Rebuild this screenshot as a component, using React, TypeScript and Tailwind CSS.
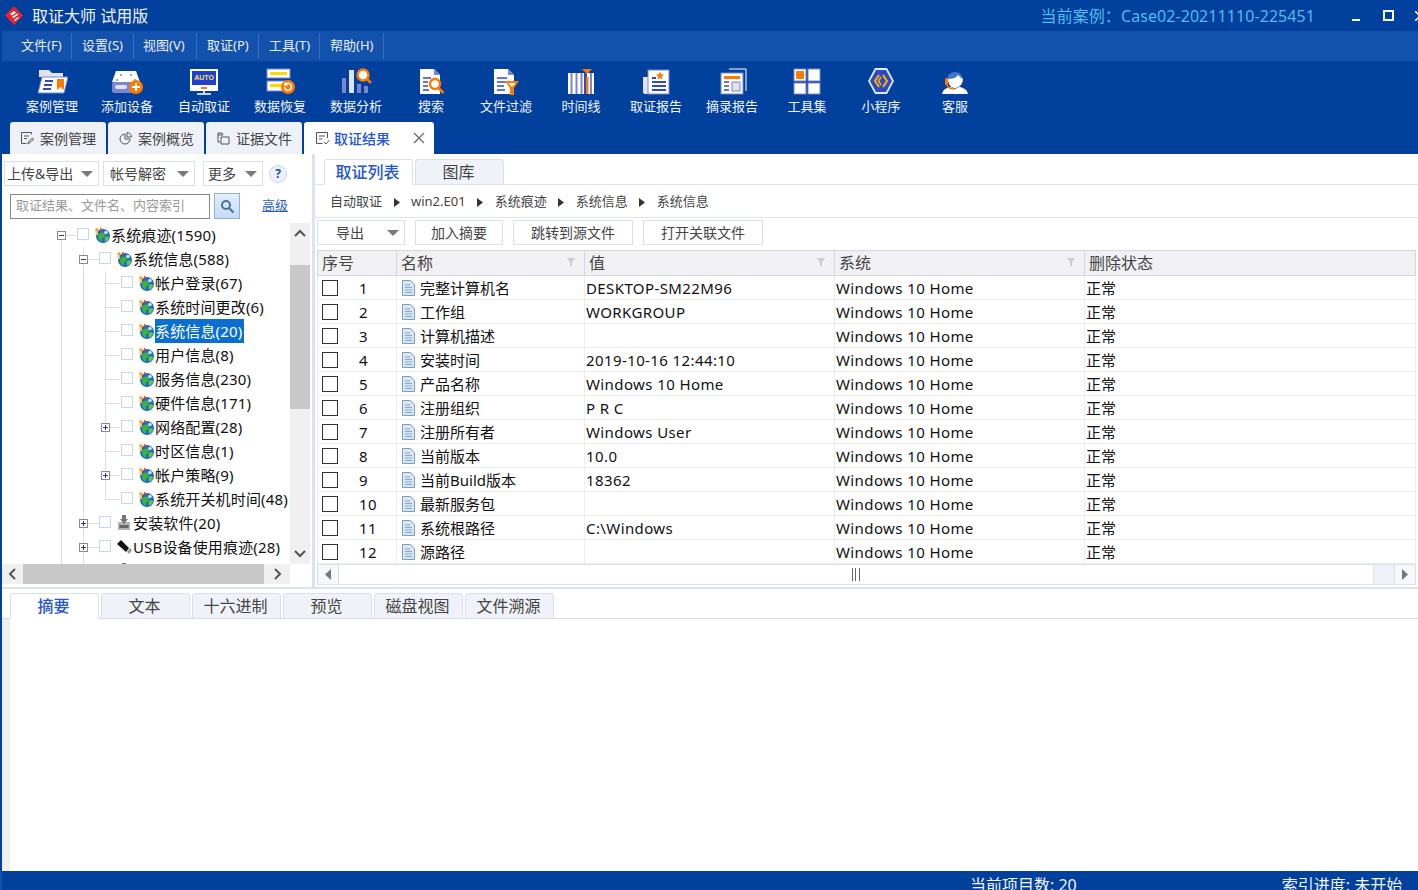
import type { ReactNode } from "react";

const TOOLBAR_ICONS: Record<string, ReactNode> = {
  case: (
    <>
      <path d="M3 3h10l3 3h11v4H3z" fill="#dfe3f5" />
      <path d="M6 10h26l-4 16H2z" fill="#fff" stroke="#7b86cc" />
      <path d="M9 14h8M8 18h8M7 22h8" stroke="#2f49c4" strokeWidth="2" />
      <path d="M21 12h7v11l-3.500-3-3.500 3z" fill="#ff7a00" />
    </>
  ),
  device: (
    <>
      <path d="M5 4h20l4 11H1z" fill="#fff" />
      <circle cx="10" cy="8" r="1" fill="#7b86cc" />
      <circle cx="20" cy="8" r="1" fill="#7b86cc" />
      <circle cx="6" cy="13" r="1" fill="#7b86cc" />
      <circle cx="24" cy="13" r="1" fill="#7b86cc" />
      <rect x="1" y="15" width="27" height="11" rx="2" fill="#7b86cc" />
      <rect x="4" y="18" width="12" height="4" rx="2" fill="#dfe3f5" />
      <circle cx="25" cy="20" r="7" fill="#ff7a00" />
      <path d="M25 16v8M21 20h8" stroke="#fff" strokeWidth="2" />
    </>
  ),
  auto: (
    <>
      <rect x="2" y="2" width="28" height="22" fill="#fff" />
      <rect x="4" y="4" width="24" height="14" fill="#1f3fd0" />
      <text x="16" y="13" textAnchor="middle" fontSize="7" fontWeight="700" fill="#ffe14d" fontFamily="Liberation Sans, sans-serif">AUTO</text>
      <rect x="13" y="20" width="6" height="2" fill="#ff7a00" />
      <path d="M9 27h14M16 24v3" stroke="#fff" strokeWidth="1.500" />
    </>
  ),
  recover: (
    <>
      <rect x="3" y="2" width="23" height="9" fill="#fff" stroke="#7b86cc" />
      <rect x="6" y="5" width="17" height="3" fill="#ffd800" />
      <rect x="3" y="14" width="23" height="10" fill="#fff" stroke="#7b86cc" />
      <rect x="6" y="17" width="12" height="3" fill="#ffd800" />
      <circle cx="24" cy="20" r="7" fill="#ff7a00" />
      <path d="M20.500 20a3.500 3.500 0 1 0 1.500-3M21 15.500V18h2.500" stroke="#fff" strokeWidth="1.500" fill="none" />
    </>
  ),
  analysis: (
    <>
      <rect x="2" y="11" width="4" height="15" fill="#7b86cc" />
      <rect x="9" y="3" width="5" height="23" fill="#dfe3f5" />
      <rect x="17" y="17" width="4" height="9" fill="#7b86cc" />
      <rect x="24" y="19" width="4" height="7" fill="#7b86cc" />
      <circle cx="23" cy="8" r="5.500" fill="#fff" stroke="#ff7a00" strokeWidth="2.500" />
      <path d="M27 12l4 4" stroke="#ff7a00" strokeWidth="2.500" />
    </>
  ),
  search: (
    <>
      <path d="M5 2h14l6 6v19H5z" fill="#fff" />
      <path d="M19 2v6h6z" fill="#7b86cc" />
      <path d="M8 11h8M8 15h5M8 19h5M8 23h6" stroke="#2f49c4" strokeWidth="1.500" />
      <circle cx="20" cy="17" r="5" fill="#fff" stroke="#ff7a00" strokeWidth="2.500" />
      <path d="M23.500 21l5 5" stroke="#ff7a00" strokeWidth="2.500" />
    </>
  ),
  filter: (
    <>
      <path d="M4 2h14l6 6v19H4z" fill="#fff" />
      <path d="M18 2v6h6z" fill="#7b86cc" />
      <path d="M7 11h10M7 15h9M7 19h7M7 23h8" stroke="#2f49c4" strokeWidth="1.500" />
      <path d="M15 14h14l-5 7v7h-4v-7z" fill="#ff7a00" />
      <path d="M18.500 16h7l-3.500 4z" fill="#fff" />
    </>
  ),
  timeline: (
    <>
      <rect x="3" y="6" width="26" height="21" fill="#fff" />
      <path d="M6.500 6v21M11.500 6v21M16.500 6v21" stroke="#7b86cc" strokeWidth="2" />
      <rect x="19" y="6" width="3" height="21" fill="#2f49c4" />
      <rect x="21" y="10" width="2.500" height="17" fill="#ff7a00" />
      <path d="M26 6v21" stroke="#7b86cc" strokeWidth="2" />
      <path d="M17 2h10l-5 5z" fill="#ff7a00" />
    </>
  ),
  report: (
    <>
      <path d="M3 10h6v17H5a2 2 0 0 1-2-2z" fill="#dfe3f5" />
      <rect x="8" y="3" width="21" height="24" fill="#fff" stroke="#7b86cc" />
      <path d="M20 4.500l1.200 2.800 3 .2-2.300 2 .8 3-2.700-1.600-2.700 1.600.8-3-2.300-2 3-.2z" fill="#ff7a00" />
      <path d="M12 11h4M12 15h14M12 19h14M12 23h14" stroke="#2f49c4" strokeWidth="2" />
    </>
  ),
  excerpt: (
    <>
      <path d="M13 2h17v22" fill="none" stroke="#fff" strokeWidth="1" />
      <rect x="5" y="6" width="22" height="21" fill="#fff" stroke="#7b86cc" />
      <rect x="8" y="9" width="16" height="3" fill="#ff7a00" />
      <path d="M8 15h5M8 19h5M8 23h5" stroke="#2f49c4" strokeWidth="1.500" />
      <rect x="16" y="15" width="8" height="9" fill="#dfe3f5" stroke="#7b86cc" />
    </>
  ),
  tools: (
    <>
      <rect x="3" y="2" width="12" height="12" fill="#fff" stroke="#7b86cc" />
      <rect x="5" y="4" width="8" height="8" fill="#ff7a00" />
      <rect x="17" y="2" width="12" height="12" fill="#fff" stroke="#7b86cc" />
      <rect x="3" y="16" width="12" height="11" fill="#fff" stroke="#7b86cc" />
      <rect x="17" y="16" width="12" height="11" fill="#fff" stroke="#7b86cc" />
    </>
  ),
  miniapp: (
    <>
      <path d="M10 1h12l7 13-7 13H10L3 14z" fill="#d8f0fa" />
      <path d="M11 3h10l6 11-6 11H11L5 14z" fill="#2f49c4" />
      <path d="M14 8l-4 6 4 6M18 8l4 6-4 6" fill="none" stroke="#ffb300" strokeWidth="2" />
      <path d="M16 10l-2.500 4 2.500 4" fill="none" stroke="#ffb300" strokeWidth="1.500" />
    </>
  ),
  agent: (
    <>
      <path d="M8 13a8 8 0 1 1 16 0z" fill="#3f78c8" />
      <path d="M9 12c4 0 8-1 10-4 2 2 3 3 5 4 0 5-4 9-8 9s-7-4-7-9z" fill="#fff" />
      <path d="M3 27c1-5 6-7 9-7l4 2 4-2c3 0 8 2 9 7z" fill="#fff" />
      <rect x="6" y="11" width="3" height="7" rx="1" fill="#ff7a00" />
      <path d="M8 18c1 3 4 4 8 4" stroke="#ff7a00" strokeWidth="1.500" fill="none" />
    </>
  ),
};

const toolbarItems = [
  ["case", "案例管理", ""],
  ["device", "添加设备", "ml-[1px]"],
  ["auto", "自动取证", "ml-[3px]"],
  ["recover", "数据恢复", "ml-[2px]"],
  ["analysis", "数据分析", "ml-[2px]"],
  ["search", "搜索", "ml-[1px]"],
  ["filter", "文件过滤", "ml-[1px]"],
  ["timeline", "时间线", "ml-[1px]"],
  ["report", "取证报告", "ml-[1px]"],
  ["excerpt", "摘录报告", "ml-[2px]"],
  ["tools", "工具集", "ml-[1px]"],
  ["miniapp", "小程序", ""],
  ["agent", "客服", ""],
];

const menuItems = [
  ["文件(F)", "w-[70px] pl-[19px]"],
  ["设置(S)", "w-[62px] pl-[10px]"],
  ["视图(V)", "w-[63px] pl-[9px]"],
  ["取证(P)", "w-[62px] pl-[10px]"],
  ["工具(T)", "w-[61px] pl-[10px]"],
  ["帮助(H)", "w-[64px] pl-[10px]"],
];

const rows = [
  ["完整计算机名", "DESKTOP-SM22M96"],
  ["工作组", "WORKGROUP"],
  ["计算机描述", ""],
  ["安装时间", "2019-10-16 12:44:10"],
  ["产品名称", "Windows 10 Home"],
  ["注册组织", "P R C"],
  ["注册所有者", "Windows User"],
  ["当前版本", "10.0"],
  ["当前Build版本", "18362"],
  ["最新服务包", ""],
  ["系统根路径", "C:\\Windows"],
  ["源路径", ""],
];

type TreeNode = {
  label: string;
  level: number;
  expander?: "plus" | "minus";
  icon?: "globe" | "disk" | "usb";
  selected?: boolean;
  last?: boolean;
};

const treeNodes: TreeNode[] = [
  { label: "系统痕迹(1590)", level: 0, expander: "minus" },
  { label: "系统信息(588)", level: 1, expander: "minus" },
  { label: "帐户登录(67)", level: 2 },
  { label: "系统时间更改(6)", level: 2 },
  { label: "系统信息(20)", level: 2, selected: true },
  { label: "用户信息(8)", level: 2 },
  { label: "服务信息(230)", level: 2 },
  { label: "硬件信息(171)", level: 2 },
  { label: "网络配置(28)", level: 2, expander: "plus" },
  { label: "时区信息(1)", level: 2 },
  { label: "帐户策略(9)", level: 2, expander: "plus" },
  { label: "系统开关机时间(48)", level: 2, last: true },
  { label: "安装软件(20)", level: 1, expander: "plus", icon: "disk" },
  { label: "USB设备使用痕迹(28)", level: 1, expander: "plus", icon: "usb" },
  { label: "", level: 1, icon: "disk" },
];

function Caret() {
  return (
    <svg width="12" height="6" viewBox="0 0 12 6" className="shrink-0">
      <path d="M0 0h12L6 6z" fill="#7a7a7a" />
    </svg>
  );
}

function TreeIcon({ type }: { type: TreeNode["icon"] }) {
  if (type === "disk") {
    return (
      <svg width="14" height="16" viewBox="0 0 14 16" className="shrink-0">
        <rect x="1" y="7" width="12" height="8" fill="#b4b4b4" />
        <rect x="2.500" y="10" width="9" height="3" fill="#666" />
        <path d="M5 0h4v4h2L7 9 3 4h2z" fill="#777" />
      </svg>
    );
  }
  if (type === "usb") {
    return (
      <svg width="15" height="16" viewBox="0 0 15 16" className="shrink-0">
        <path d="M0 5l4-4 8 8-3 4z" fill="#111" />
        <path d="M10 13l3-4 2 2-3 4z" fill="#999" />
      </svg>
    );
  }
  return (
    <svg width="15" height="15" viewBox="0 0 15 15" className="shrink-0">
      <circle cx="8" cy="8" r="7" fill="#1d6cc0" />
      <path d="M5 5c2-1 5-1 5 2s-3 2-3 5-4 0-4-3 1-3 2-4z" fill="#3fb03f" />
      <path d="M10 9c2-1 4-1 4 1s-3 4-4 3 0-3 0-4z" fill="#62c64e" />
      <path d="M1 0l3 1-1 3-3-1z" fill="#f2a12a" />
      <path d="M5 0l3 1-1 2-2-1z" fill="#e44b2f" />
      <path d="M0 5l3-1v3H1z" fill="#f6c54a" />
      <circle cx="11" cy="4.500" r="1.800" fill="#c9e8fc" />
    </svg>
  );
}

function DocIcon() {
  return (
    <svg width="13" height="16" viewBox="0 0 13 16" className="shrink-0">
      <path d="M.5.5h8l4 4v11H.5z" fill="#d5e7f5" stroke="#7d9fbd" />
      <path d="M3 5h5M3 7.500h7M3 10h7M3 12.500h7" stroke="#8aa9c0" />
    </svg>
  );
}

function TreeRow({ node }: { node: TreeNode }) {
  return (
    <div className="flex h-6 shrink-0 items-center whitespace-nowrap">
      {Array.from({ length: node.level }).map((_, i) => (
        <div key={i} className="h-full w-[22px] shrink-0 pl-[11px]">
          <div className="h-full w-px bg-[#dddddd]" />
        </div>
      ))}
      <div className="relative flex h-full w-[22px] shrink-0 items-center justify-center">
        {node.level === 0 && <div className="absolute bottom-0 left-[11px] top-1/2 w-px bg-[#dddddd]" />}
        {node.level > 0 && (
          <div className={`absolute left-[11px] top-0 w-px bg-[#dddddd] ${node.last ? "h-1/2" : "h-full"}`} />
        )}
        <div className="absolute left-[11px] top-1/2 h-px w-[15px] bg-[#dddddd]" />
        {node.expander && (
          <div className="relative flex h-[9px] w-[9px] items-center justify-center border border-[#8a8a8a] bg-white">
            <div className="h-px w-[5px] bg-[#2b3a6b]" />
            {node.expander === "plus" && <div className="absolute h-[5px] w-px bg-[#2b3a6b]" />}
          </div>
        )}
      </div>
      <div className="flex h-full w-[22px] shrink-0 items-center justify-center">
        <div className="mb-[2px] h-3 w-3 border border-[#c5d6f5] bg-white" />
      </div>
      <div className="ml-px w-[14px] shrink-0">
        <TreeIcon type={node.icon ?? "globe"} />
      </div>
      <span
        className={`ml-[2px] h-6 text-[15px] leading-6 tracking-[0.15px] ${
          node.selected ? "bg-[#0a6fd0] pr-[2px] text-white" : "text-[#111111]"
        }`}
      >
        {node.label}
      </span>
    </div>
  );
}

function TabButton({ label, active, width }: { label: string; active?: boolean; width: string }) {
  return (
    <div
      className={`-mb-px flex h-[26px] items-center justify-center rounded-t-[3px] border border-[#d8e0ef] pr-[2px] text-[16px] ${width} ${
        active ? "border-b-white bg-white font-medium text-[#2456d8]" : "bg-[#eff2f8] text-[#444444]"
      }`}
    >
      {label}
    </div>
  );
}

export default function App() {
  return (
    <div className="flex h-[890px] w-[1418px] flex-col overflow-hidden bg-[#01409c] font-['Noto_Sans','Noto_Sans_CJK_SC',sans-serif]">
      {/* title bar */}
      <div className="flex h-[31px] shrink-0 items-center">
        <svg width="18" height="19" viewBox="0 0 18 19" className="ml-[5px] shrink-0">
          <path d="M9 0l9 9.500L9 19 0 9.500z" fill="#e3262e" />
          <path d="M5 8l4-3 2 1.500-4 3zM7 11l5-3.500 1.500 1-5 3.500zM9 14l4-3 1 1-4 3z" fill="#fff" />
        </svg>
        <span className="ml-[9px] text-[16px] text-[#f2f5fb]">取证大师 试用版</span>
        <span className="ml-auto text-[16px] tracking-[0.07px] text-[#4dbcf0]">当前案例：Case02-20211110-225451</span>
        <div className="ml-[37px] mt-[8px] h-[2px] w-[8px] shrink-0 bg-white" />
        <div className="ml-[23px] h-[11px] w-[11px] shrink-0 border-2 border-white" />
        <svg width="10" height="10" viewBox="0 0 10 10" className="-mr-[7px] ml-[21px] shrink-0" stroke="#fff" strokeWidth="1.500">
          <path d="M0 0l10 10M10 0L0 10" />
        </svg>
      </div>

      {/* menu */}
      <div className="ml-[2px] flex h-[30px] shrink-0 items-center bg-[#1352ac]">
        {menuItems.map(([label, cls]) => (
          <div key={label} className={`flex h-[26px] items-center border-r border-[#3a6dbb] text-[13px] text-[#e8eef8] ${cls}`}>
            {label}
          </div>
        ))}
      </div>

      {/* toolbar */}
      <div className="flex h-[61px] shrink-0 pl-[15px]">
        {toolbarItems.map(([icon, label, gap]) => (
          <div key={label} className={`flex w-[74px] flex-col items-center pt-[6px] ${gap}`}>
            <svg width="32" height="28" viewBox="0 0 32 28">
              {TOOLBAR_ICONS[icon]}
            </svg>
            <span className="mt-[2px] whitespace-nowrap text-[13px] leading-[18px] text-[#f2f5fb]">{label}</span>
          </div>
        ))}
      </div>

      {/* page tabs */}
      <div className="flex h-[32px] shrink-0 items-end gap-[2px] pl-[10px]">
        {[
          ["案例管理", "edit"],
          ["案例概览", "pie"],
          ["证据文件", "files"],
        ].map(([label, icon]) => (
          <div key={label} className="flex h-[32px] w-[96px] items-center justify-center gap-[6px] rounded-t-[3px] bg-[#eef2f8] pl-px text-[14px] text-[#444444]">
            <svg width="13" height="13" viewBox="0 0 13 13" fill="none" stroke="#555555">
              {icon === "edit" && <path d="M10.500 2.500V.5h-10v11h5M3 4h5M3 6.500h3M7 12l.5-2.500 4-3.500 1 1.500-4 3.500z" />}
              {icon === "pie" && <path d="M6 2a5 5 0 1 0 5 5H6zM8 .5a4.500 4.500 0 0 1 4.500 4.500H8z" />}
              {icon === "files" && <path d="M1 1h4l1 2h-5zM1 3v7h2M4 5h8v7H4z" />}
            </svg>
            {label}
          </div>
        ))}
        <div className="flex h-[32px] w-[130px] items-center rounded-t-[3px] bg-white pl-[12px] text-[14px] font-medium text-[#2456d8]">
          <svg width="14" height="13" viewBox="0 0 14 13" fill="none" stroke="#555555">
            <path d="M11.500 6V.5H.5v11h6M3 4h6M3 7h3M8 10l2 2 3.500-4" />
          </svg>
          <span className="ml-[4px]">取证结果</span>
          <svg width="12" height="12" viewBox="0 0 12 12" className="ml-[23px]" stroke="#666666" strokeWidth="1.200">
            <path d="M1 1l10 10M11 1L1 11" />
          </svg>
        </div>
      </div>

      {/* everything below the tabs, with the blue window edge on the left */}
      <div className="ml-[2px] flex h-[717px] shrink-0 flex-col bg-white">
        {/* main split */}
        <div className="flex h-[435px] shrink-0 border-b-2 border-[#d9e4f2]">
          {/* left panel */}
          <div className="flex w-[310px] shrink-0 flex-col">
            <div className="mt-[7px] flex h-[25px] shrink-0 items-center pl-[2px] text-[14px] text-[#444444]">
              <div className="flex h-[25px] w-[95px] items-center justify-between border border-[#d8e0ef] pl-[2px] pr-[5px]">
                上传&导出
                <Caret />
              </div>
              <div className="ml-[4px] flex h-[25px] w-[92px] items-center justify-between border border-[#d8e0ef] pl-[6px] pr-[5px]">
                帐号解密
                <Caret />
              </div>
              <div className="ml-[8px] flex h-[25px] w-[60px] items-center justify-between border border-[#d8e0ef] pl-[4px] pr-[5px]">
                更多
                <Caret />
              </div>
              <div className="ml-[6px] flex h-[18px] w-[18px] items-center justify-center rounded-full border border-[#c5d6f5] bg-[#eef3fb] text-[12px] font-bold text-[#1f4fa8]">
                ?
              </div>
            </div>
            <div className="mt-[7px] flex h-[26px] shrink-0 items-center pl-[8px]">
              <div className="flex h-[25px] w-[200px] items-center border border-[#888888] pl-[5px] text-[13px] text-[#999999]">
                取证结果、文件名、内容索引
              </div>
              <div className="ml-[4px] flex h-[26px] w-[26px] items-center justify-center border border-[#8fb2d8] bg-gradient-to-b from-[#e3effd] to-[#c4dbf8]">
                <svg width="15" height="15" viewBox="0 0 15 15" fill="none" stroke="#48709c" strokeWidth="2">
                  <circle cx="6" cy="6" r="4" />
                  <path d="M9 9l4.500 4.500" />
                </svg>
              </div>
              <span className="ml-[22px] text-[13px] text-[#2a5fc0] underline">高级</span>
            </div>

            <div className="mt-[4px] flex min-h-0 flex-1 flex-col">
              <div className="flex h-[341px] shrink-0">
                <div className="flex w-[288px] shrink-0 flex-col overflow-hidden pl-[48px]">
                  {treeNodes.map((node, i) => (
                    <TreeRow key={i} node={node} />
                  ))}
                </div>
                {/* vertical scrollbar */}
                <div className="flex w-[20px] shrink-0 flex-col items-center bg-[#f0f0f0]">
                  <svg width="12" height="8" viewBox="0 0 12 8" className="mt-[6px] shrink-0" fill="none" stroke="#555555" strokeWidth="2">
                    <path d="M1 7l5-5 5 5" />
                  </svg>
                  <div className="mt-[28px] h-[144px] w-full shrink-0 bg-[#c8c8c8]" />
                  <svg width="12" height="8" viewBox="0 0 12 8" className="mt-auto mb-[6px] shrink-0" fill="none" stroke="#555555" strokeWidth="2">
                    <path d="M1 1l5 5 5-5" />
                  </svg>
                </div>
              </div>
              {/* horizontal scrollbar */}
              <div className="flex h-[20px] w-[288px] shrink-0 items-center bg-[#f0f0f0]">
                <svg width="8" height="12" viewBox="0 0 8 12" className="ml-[6px] shrink-0" fill="none" stroke="#555555" strokeWidth="2">
                  <path d="M7 1L2 6l5 5" />
                </svg>
                <div className="ml-[7px] h-full w-[241px] shrink-0 bg-[#c8c8c8]" />
                <svg width="8" height="12" viewBox="0 0 8 12" className="ml-[10px] shrink-0" fill="none" stroke="#555555" strokeWidth="2">
                  <path d="M1 1l5 5-5 5" />
                </svg>
              </div>
            </div>
          </div>

          {/* splitter */}
          <div className="w-[3px] shrink-0 bg-[#d9e4f2]" />

          {/* right panel */}
          <div className="flex min-w-0 flex-1 flex-col">
            <div className="flex h-[31px] shrink-0 items-end gap-[2px] border-b border-[#dfe4ee] pl-[9px]">
              <TabButton label="取证列表" active width="w-[89px]" />
              <TabButton label="图库" width="w-[89px]" />
            </div>
            <div className="flex h-[33px] shrink-0 items-center border-b border-[#dfe4ee] pl-[15px] pt-[2px] text-[13px] text-[#444444]">
              {["自动取证", "win2.E01", "系统痕迹", "系统信息", "系统信息"].map((crumb, i) => (
                <div key={i} className="flex items-center">
                  {i > 0 && (
                    <svg width="6" height="9" viewBox="0 0 6 9" className="mx-[11.500px]">
                      <path d="M0 0l6 4.500L0 9z" fill="#333333" />
                    </svg>
                  )}
                  {crumb}
                </div>
              ))}
            </div>
            <div className="flex h-[32px] shrink-0 items-start gap-[10px] pl-[2px] pt-[2px] text-[14px] text-[#444444]">
              <div className="flex h-[25px] w-[88px] items-center justify-between border border-[#d8e0ef] pl-[18px] pr-[5px]">
                导出
                <Caret />
              </div>
              <div className="flex h-[25px] w-[88px] items-center justify-center border border-[#d8e0ef]">加入摘要</div>
              <div className="flex h-[25px] w-[120px] items-center justify-center border border-[#d8e0ef]">跳转到源文件</div>
              <div className="flex h-[25px] w-[120px] items-center justify-center border border-[#d8e0ef]">打开关联文件</div>
            </div>

            {/* table */}
            <div className="ml-[2px] mr-[2px] flex min-h-0 flex-1 flex-col">
              <div className="flex h-[26px] shrink-0 border-y border-[#d5d5e3] bg-[#f1f1f4] text-[16px] text-[#444444]">
                <div className="flex w-[80px] items-center border-x border-[#d5d5e3] pl-[4px]">序号</div>
                {[
                  ["名称", "w-[188px]"],
                  ["值", "w-[250px]"],
                  ["系统", "w-[250px]"],
                ].map(([label, width]) => (
                  <div key={label} className={`flex items-center justify-between border-r border-[#d5d5e3] pl-[4px] pr-[9px] ${width}`}>
                    {label}
                    <svg width="8" height="8" viewBox="0 0 8 8" className="mb-[3px]">
                      <path d="M0 0h8L5 4v4H3V4z" fill="#cccccc" />
                    </svg>
                  </div>
                ))}
                <div className="flex flex-1 items-center border-r border-[#d5d5e3] pl-[4px]">删除状态</div>
              </div>
              <div className="flex h-[288px] shrink-0 flex-col text-[15px] text-[#111111]">
                {rows.map(([name, value], i) => (
                  <div key={name} className="flex h-6 shrink-0 border-b border-[#ececf2]">
                    <div className="flex w-[80px] items-center border-x border-[#ececf2] pl-[4px]">
                      <div className="h-4 w-4 shrink-0 border border-[#333333]" />
                      <span className="ml-[21px] pt-px tracking-[0.4px]">{i + 1}</span>
                    </div>
                    <div className="flex w-[188px] items-center gap-[5px] border-r border-[#ececf2] pl-[5px]">
                      <DocIcon />
                      <span className="pt-px">{name}</span>
                    </div>
                    <div className="flex w-[250px] items-center border-r border-[#ececf2] pl-[1px] pt-px tracking-[0.4px]">{value}</div>
                    <div className="flex w-[250px] items-center border-r border-[#ececf2] pl-[1px] pt-px tracking-[0.4px]">Windows 10 Home</div>
                    <div className="flex flex-1 items-center border-r border-[#ececf2] pl-[1px] pt-px">正常</div>
                  </div>
                ))}
              </div>
              <div className="flex h-[21px] shrink-0 border border-[#d8e0ef] bg-white">
                <div className="flex w-[21px] items-center justify-center border-r border-[#d8e0ef] bg-[#f6f8fb]">
                  <svg width="6" height="11" viewBox="0 0 6 11">
                    <path d="M6 0v11L0 5.500z" fill="#777777" />
                  </svg>
                </div>
                <div className="flex flex-1 items-center justify-center border-r border-[#d8e0ef] pr-[1px]">
                  <div className="flex h-[13px] w-[8px] justify-between">
                    <div className="w-px bg-[#666666]" />
                    <div className="w-px bg-[#666666]" />
                    <div className="w-px bg-[#666666]" />
                  </div>
                </div>
                <div className="w-[20px] bg-[#eef1f7]" />
                <div className="flex w-[21px] items-center justify-center border-l border-[#d8e0ef] bg-[#f6f8fb]">
                  <svg width="6" height="11" viewBox="0 0 6 11">
                    <path d="M0 0v11l6-5.500z" fill="#777777" />
                  </svg>
                </div>
              </div>
            </div>
          </div>
        </div>

        {/* bottom tabs */}
        <div className="flex h-[30px] shrink-0 items-end gap-[2px] border-b border-[#d5d5e3] pl-[8px]">
          <TabButton label="摘要" active width="w-[89px]" />
          <TabButton label="文本" width="w-[89px]" />
          <TabButton label="十六进制" width="w-[89px]" />
          <TabButton label="预览" width="w-[89px]" />
          <TabButton label="磁盘视图" width="w-[89px]" />
          <TabButton label="文件溯源" width="w-[89px]" />
        </div>
        <div className="flex min-h-0 flex-1">
          <div className="w-[8px] shrink-0 bg-[#efefef]" />
        </div>
      </div>

      {/* status bar */}
      <div className="flex h-[19px] shrink-0 overflow-hidden border-l-2 border-[#1352ac] pt-[4px] text-[16px] leading-5 text-[#f2f5fb]">
        <span className="ml-[968px]">当前项目数: 20</span>
        <span className="ml-[205px]">索引进度: 未开始</span>
      </div>
    </div>
  );
}
